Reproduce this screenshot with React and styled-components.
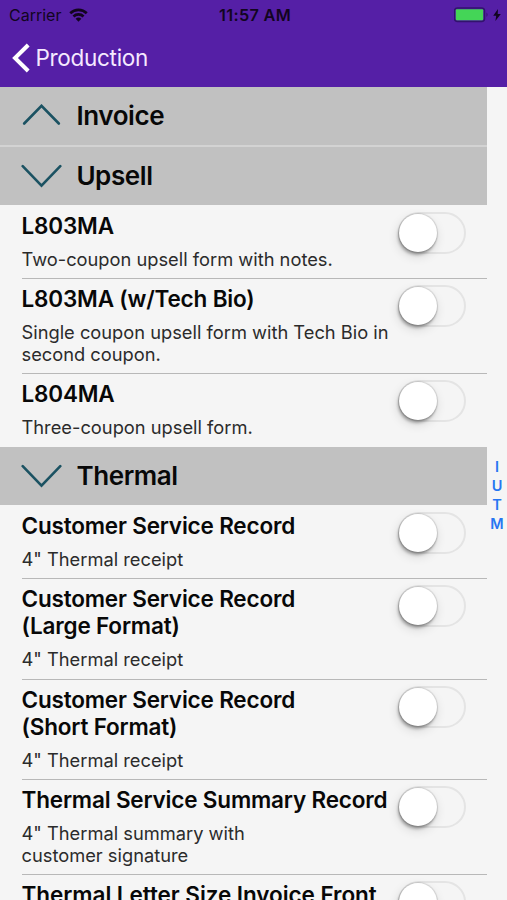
import React, { useState } from "react";
import styled, { createGlobalStyle } from "styled-components";

const GlobalStyle = createGlobalStyle`
  *, *::before, *::after { box-sizing: border-box; }
  html, body { margin: 0; padding: 0; background: #f5f5f5; }
  body { overflow: hidden; }
  button { font: inherit; padding: 0; border: 0; background: none; cursor: pointer; }
`;

const Screen = styled.div`
  display: flex;
  flex-direction: column;
  height: 900px;
  overflow: hidden;
  background: #f5f5f5;
  color: #080808;
  font-family: Inter, "Liberation Sans", sans-serif;
`;

const TopBar = styled.header`
  flex: none;
  height: 87px;
  background: #551fa6;
`;

const StatusBar = styled.div`
  display: grid;
  grid-template-columns: 1fr auto 1fr;
  align-items: center;
  height: 29px;
  padding: 1px 6px 0 9px;
  color: #12051f;
  font-size: 16px;
  line-height: 20px;
`;

const StatusGroup = styled.div`
  display: flex;
  align-items: center;
  justify-content: ${(p) => (p.$end ? "flex-end" : "flex-start")};
  gap: ${(p) => (p.$end ? "3px" : "8px")};
`;

const Carrier = styled.span`
  letter-spacing: 0;
`;

const Clock = styled.span`
  font-size: 16.3px;
  font-weight: 600;
  letter-spacing: 0.3px;
`;

const NavBar = styled.nav`
  display: flex;
  height: 58px;
`;

const BackButton = styled.button`
  display: flex;
  align-items: center;
  gap: 5.5px;
  height: 58px;
  padding-left: 12px;
  color: #f5e9ff;
`;

const BackLabel = styled.span`
  font-size: 22.5px;
  line-height: 28px;
  letter-spacing: -0.3px;
`;

const Body = styled.div`
  display: flex;
  flex: 1;
  min-height: 0;
`;

const List = styled.main`
  width: 487px;
  flex: none;
  overflow: hidden;
`;

const SectionHeader = styled.button`
  display: flex;
  align-items: center;
  gap: 14.4px;
  width: 100%;
  height: ${(p) => (p.$divided ? "60px" : "58px")};
  padding: 0 0 1px 21px;
  border-bottom: ${(p) => (p.$divided ? "2px solid #d3d3d3" : "0")};
  background: #c1c1c1;
  color: #080808;
`;

const SectionTitle = styled.span`
  font-size: 26px;
  font-weight: 600;
  line-height: 32px;
  letter-spacing: -0.4px;
`;

const Row = styled.div`
  display: flex;
  position: relative;
  height: ${(p) => p.$height}px;
  padding: 7px 21px 0 21.5px;

  &:not(:last-child)::after {
    content: "";
    position: absolute;
    left: 22px;
    right: 0;
    bottom: -1px;
    height: 1px;
    background: #b8b8b8;
  }
`;

const RowText = styled.div`
  flex: 1;
  min-width: 0;
  white-space: pre;
`;

const RowTitle = styled.div`
  font-size: 22.5px;
  font-weight: 600;
  line-height: 27px;
  letter-spacing: ${(p) => p.$tracking ?? -0.18}px;
`;

const RowDetail = styled.div`
  margin-top: 9px;
  color: #2b2b2b;
  font-size: 18.3px;
  line-height: 22.3px;
`;

const Toggle = styled.button`
  flex: none;
  width: 68px;
  height: 42px;
  border: 2px solid #e4e4e4;
  border-radius: 21px;
  background: ${(p) => (p.$on ? "#4cd964" : "#f5f5f5")};
`;

const Knob = styled.span`
  display: block;
  width: 38px;
  height: 38px;
  border-radius: 50%;
  background: #fff;
  box-shadow: 0 0 1px 1px rgba(0, 0, 0, 0.12), -1px 3px 3px rgba(0, 0, 0, 0.28), -1px 4px 11px rgba(0, 0, 0, 0.14);
  transform: translateX(${(p) => (p.$on ? "27px" : "-1px")});
`;

const IndexBar = styled.aside`
  display: flex;
  flex: 1;
  flex-direction: column;
  align-items: center;
  padding-top: 370px;
  color: #2676f2;
  font-size: 14.5px;
  font-weight: 600;
  line-height: 19px;
`;

function Wifi() {
  return (
    <svg width="19" height="14" viewBox="0 0 20 14" fill="none" stroke="currentColor" strokeWidth="2.8">
      <path d="M1.3 5.2a12.3 12.3 0 0 1 17.4 0" />
      <path d="M4.7 8.6a7.5 7.5 0 0 1 10.6 0" />
      <path d="M10 14l-3-3a4.3 4.3 0 0 1 6 0z" fill="currentColor" stroke="none" />
    </svg>
  );
}

function Battery() {
  return (
    <svg width="36" height="16" viewBox="0 0 36 16" fill="none">
      <rect x="0.5" y="1" width="30" height="13.5" rx="3" stroke="#32136d" strokeWidth="1.5" />
      <rect x="1.8" y="2.3" width="27.4" height="10.9" rx="1" fill="#44d557" />
      <path d="M32.5 5.5q2.2 2.2 0 4.5z" fill="#32136d" />
    </svg>
  );
}

function Bolt() {
  return (
    <svg width="8" height="12" viewBox="0 0 8 12" fill="currentColor">
      <path d="M5 0L.2 6.7h3L2.4 12 7.8 4.9H4.7z" />
    </svg>
  );
}

function BackChevron() {
  return (
    <svg width="18" height="30" viewBox="0 0 18 30" fill="none" stroke="#fff" strokeWidth="4">
      <path d="M16.2 2L3 15l13.2 13" />
    </svg>
  );
}

function SectionChevron({ open }) {
  return (
    <svg width="41" height="24" viewBox="0 0 41 24" fill="none" stroke="#1b5262" strokeWidth="2.6" strokeLinecap="round">
      <path d={open ? "M1.7 2.2L20.5 21.6 39.3 2.2" : "M3.2 19.5L20.5 1.8 37.8 19.5"} />
    </svg>
  );
}

const SECTIONS = [
  { name: "Invoice", open: false, items: [] },
  {
    name: "Upsell",
    open: true,
    items: [
      { title: "L803MA", detail: "Two-coupon upsell form with notes.", height: 73 },
      { title: "L803MA (w/Tech Bio)", detail: "Single coupon upsell form with Tech Bio in\nsecond coupon.", height: 95 },
      { title: "L804MA", detail: "Three-coupon upsell form.", height: 74 },
    ],
  },
  {
    name: "Thermal",
    open: true,
    items: [
      { title: "Customer Service Record", detail: '4" Thermal receipt', height: 73 },
      { title: "Customer Service Record\n(Large Format)", detail: '4" Thermal receipt', height: 101 },
      { title: "Customer Service Record\n(Short Format)", detail: '4" Thermal receipt', height: 100 },
      { title: "Thermal Service Summary Record", detail: '4" Thermal summary with\ncustomer signature', height: 95 },
      { title: "Thermal Letter Size Invoice Front", detail: "", height: 73, tracking: -0.06 },
    ],
  },
];

function FormRow({ item }) {
  const [on, setOn] = useState(false);
  return (
    <Row $height={item.height}>
      <RowText>
        <RowTitle $tracking={item.tracking}>{item.title}</RowTitle>
        <RowDetail>{item.detail}</RowDetail>
      </RowText>
      <Toggle $on={on} role="switch" aria-checked={on} onClick={() => setOn(!on)}>
        <Knob $on={on} />
      </Toggle>
    </Row>
  );
}

function Section({ section }) {
  const [open, setOpen] = useState(section.open);
  return (
    <section>
      <SectionHeader $divided={!open} onClick={() => setOpen(!open)}>
        <SectionChevron open={open} />
        <SectionTitle>{section.name}</SectionTitle>
      </SectionHeader>
      {open && (
        <div>
          {section.items.map((item) => (
            <FormRow key={item.title} item={item} />
          ))}
        </div>
      )}
    </section>
  );
}

export default function App() {
  return (
    <Screen>
      <GlobalStyle />
      <TopBar>
        <StatusBar>
          <StatusGroup>
            <Carrier>Carrier</Carrier>
            <Wifi />
          </StatusGroup>
          <Clock>11:57 AM</Clock>
          <StatusGroup $end>
            <Battery />
            <Bolt />
          </StatusGroup>
        </StatusBar>
        <NavBar>
          <BackButton>
            <BackChevron />
            <BackLabel>Production</BackLabel>
          </BackButton>
        </NavBar>
      </TopBar>
      <Body>
        <List>
          {SECTIONS.map((section) => (
            <Section key={section.name} section={section} />
          ))}
        </List>
        <IndexBar>
          {["I", "U", "T", "M"].map((letter) => (
            <span key={letter}>{letter}</span>
          ))}
        </IndexBar>
      </Body>
    </Screen>
  );
}
